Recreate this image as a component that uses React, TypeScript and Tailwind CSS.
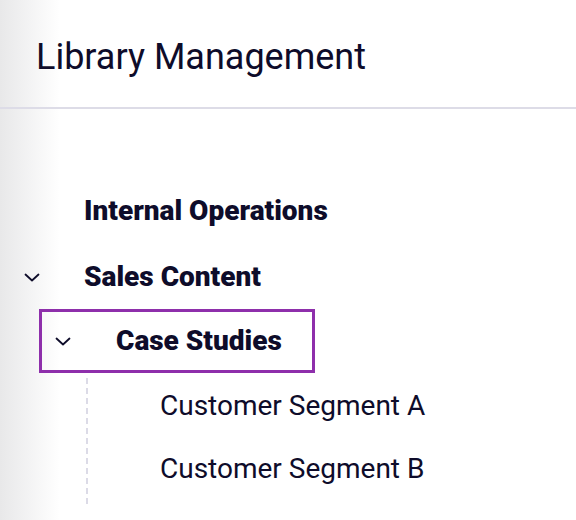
import React from "react";

function Chevron() {
  return (
    <svg width="16" height="9" viewBox="0 0 16 9" fill="none" className="block">
      <path d="M1.5 1.5L8 7.5L14.5 1.5" stroke="#0e0c2a" strokeWidth="1.8" strokeLinecap="round" strokeLinejoin="round" />
    </svg>
  );
}

export default function App() {
  return (
    <div
      className="w-[576px] h-[520px] overflow-hidden bg-[linear-gradient(to_right,#e8e8e9,#ffffff_60px)] text-[#0e0c2a]"
      style={{ fontFamily: "Roboto, 'Noto Sans', sans-serif" }}
    >
      <header className="h-[109px] border-b-2 border-[#dddce7] flex items-center pl-[36px] pt-[6px]">
        <h1 className="text-[36px] font-normal leading-none">Library Management</h1>
      </header>
      <nav className="pt-[70px]">
        <div className="h-[64px] flex items-center pl-[84px] text-[28px] font-black">Internal Operations</div>
        <div className="h-[64px] mt-[2px] flex items-center">
          <div className="w-[84px] pl-[24px]">
            <Chevron />
          </div>
          <span className="text-[28px] font-black">Sales Content</span>
        </div>
        <div className="ml-[39px] w-[276px] h-[64px] border-[3px] border-[#8e2fab] flex items-center">
          <div className="w-[74px] pl-[13px]">
            <Chevron />
          </div>
          <span className="text-[28px] font-black">Case Studies</span>
        </div>
        <div className="flex mt-[1px]">
          <div className="ml-[86px] mt-[4px] w-[2px] h-[128px] bg-[linear-gradient(#dcdbe7_60%,transparent_0)] bg-[length:2px_10px]" />
          <div className="pl-[72px]">
            <div className="h-[63px] flex items-center text-[28px]">Customer Segment A</div>
            <div className="h-[63px] flex items-center text-[28px]">Customer Segment B</div>
          </div>
        </div>
      </nav>
    </div>
  );
}
